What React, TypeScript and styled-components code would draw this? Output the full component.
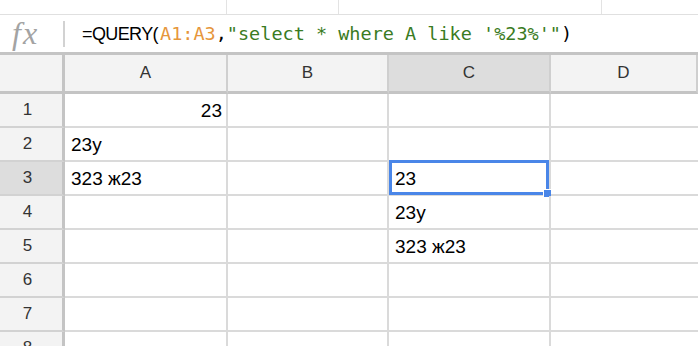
import React from "react";
import styled, { createGlobalStyle } from "styled-components";

const columns = ["A", "B", "C", "D"];

type Row = {
  n: number;
  a?: string;
  aRight?: boolean;
  c?: string;
};

const rows: Row[] = [
  { n: 1, a: "23", aRight: true },
  { n: 2, a: "23y" },
  { n: 3, a: "323 ж23", c: "23" },
  { n: 4, c: "23y" },
  { n: 5, c: "323 ж23" },
  { n: 6 },
  { n: 7 },
  { n: 8 },
];

const selectedCol = "C";
const selectedRow = 3;

const App: React.FC = () => {
  return (
    <>
      <GlobalStyle />
      <StyledPage>
        <StyledTopStrip>
          <StyledStripCell $width={227} />
          <StyledStripCell $width={112} />
          <StyledStripCell $width={263} />
          <StyledStripCell />
        </StyledTopStrip>

        <StyledFormulaBar>
          <StyledFx>fx</StyledFx>
          <StyledDivider />
          <StyledFormula>
            <StyledFn>=QUERY(</StyledFn>
            <StyledMono $color="#e6963b">A1:A3</StyledMono>
            <StyledMono>,</StyledMono>
            <StyledMono $color="#3a7b22">"select * where A like '%23%'"</StyledMono>
            <StyledMono>)</StyledMono>
          </StyledFormula>
        </StyledFormulaBar>

        <StyledSheet>
          <StyledCorner />
          {columns.map((col) => (
            <StyledColHeader key={col} $selected={col === selectedCol}>
              {col}
            </StyledColHeader>
          ))}
          {rows.map((row) => (
            <React.Fragment key={row.n}>
              <StyledRowHeader $selected={row.n === selectedRow}>
                {row.n}
              </StyledRowHeader>
              <StyledCell $right={row.aRight}>{row.a}</StyledCell>
              <StyledCell />
              <StyledCell>
                {row.c}
                {row.n === selectedRow && (
                  <StyledSelection>
                    <StyledHandle />
                  </StyledSelection>
                )}
              </StyledCell>
              <StyledCell />
            </React.Fragment>
          ))}
        </StyledSheet>
      </StyledPage>
    </>
  );
};

//Styled-Components
const GlobalStyle = createGlobalStyle`
  html, body {
    margin: 0;
    padding: 0;
    background: #ffffff;
    overflow: hidden;
  }
  * {
    box-sizing: border-box;
  }
`;

const StyledPage = styled.div`
  width: 698px;
  height: 346px;
  overflow: hidden;
  display: flex;
  flex-direction: column;
  font-family: "Liberation Sans", Arial, sans-serif;
  color: #000000;
`;

const StyledTopStrip = styled.div`
  display: flex;
  height: 15px;
  flex-shrink: 0;
  border-bottom: 1px solid #e0e0e0;
`;

const StyledStripCell = styled.div<{ $width?: number }>`
  ${({ $width }) => ($width ? `width: ${$width}px;` : "flex: 1;")}
  border-right: 1px solid #e3e3e3;
  &:last-child {
    border-right: none;
  }
`;

const StyledFormulaBar = styled.div`
  display: flex;
  align-items: center;
  height: 40px;
  flex-shrink: 0;
  border-bottom: 3px solid #c4c4c4;
`;

const StyledFx = styled.div`
  width: 63px;
  padding-left: 12px;
  font-family: "Liberation Serif", "Times New Roman", serif;
  font-style: italic;
  font-size: 32px;
  letter-spacing: 2px;
  line-height: 1;
  color: #a3a3a3;
  margin-top: -2px;
`;

const StyledDivider = styled.div`
  width: 2px;
  height: 26px;
  background: #d2d2d2;
`;

const StyledFormula = styled.div`
  display: flex;
  align-items: baseline;
  padding-left: 17px;
  white-space: pre;
`;

const StyledFn = styled.span`
  font-size: 18px;
  letter-spacing: -0.6px;
  margin-right: 2px;
`;

const StyledMono = styled.span<{ $color?: string }>`
  font-family: "DejaVu Sans Mono", "Liberation Mono", monospace;
  font-size: 18.5px;
  color: ${({ $color }) => $color || "#000000"};
`;

const StyledSheet = styled.div`
  display: grid;
  grid-template-columns: 65px 163px 161px 162px 1fr;
  grid-template-rows: 39px;
  grid-auto-rows: 34px;
`;

const StyledCorner = styled.div`
  background: #f3f3f3;
  border-right: 3px solid #c4c4c4;
  border-bottom: 3px solid #c4c4c4;
`;

const StyledColHeader = styled.div<{ $selected?: boolean }>`
  display: flex;
  align-items: center;
  justify-content: center;
  background: ${({ $selected }) => ($selected ? "#dddddd" : "#f3f3f3")};
  border-right: 2px solid #cfcfcf;
  border-bottom: 3px solid #c4c4c4;
  font-size: 17px;
  color: #333333;
  &:last-of-type {
    border-right: none;
  }
`;

const StyledRowHeader = styled.div<{ $selected?: boolean }>`
  display: flex;
  align-items: center;
  justify-content: center;
  padding-right: 7px;
  background: ${({ $selected }) => ($selected ? "#dddddd" : "#f3f3f3")};
  border-right: 3px solid #c4c4c4;
  border-bottom: 2px solid #d2d2d2;
  font-size: 17px;
  color: #333333;
`;

const StyledCell = styled.div<{ $right?: boolean }>`
  position: relative;
  display: flex;
  align-items: center;
  justify-content: ${({ $right }) => ($right ? "flex-end" : "flex-start")};
  padding: 1px 4px 0 6px;
  border-right: 2px solid #dadada;
  border-bottom: 2px solid #dadada;
  font-size: 19px;
  white-space: nowrap;
  &:nth-child(5n + 5) {
    border-right: none;
  }
`;

const StyledSelection = styled.div`
  position: absolute;
  top: -2px;
  left: 0;
  right: 0;
  bottom: -1px;
  border: 3px solid #4a86e8;
  pointer-events: none;
`;

const StyledHandle = styled.div`
  position: absolute;
  right: -6px;
  bottom: -6px;
  width: 9px;
  height: 9px;
  background: #4a86e8;
  border: 1px solid #ffffff;
`;

export default App;
